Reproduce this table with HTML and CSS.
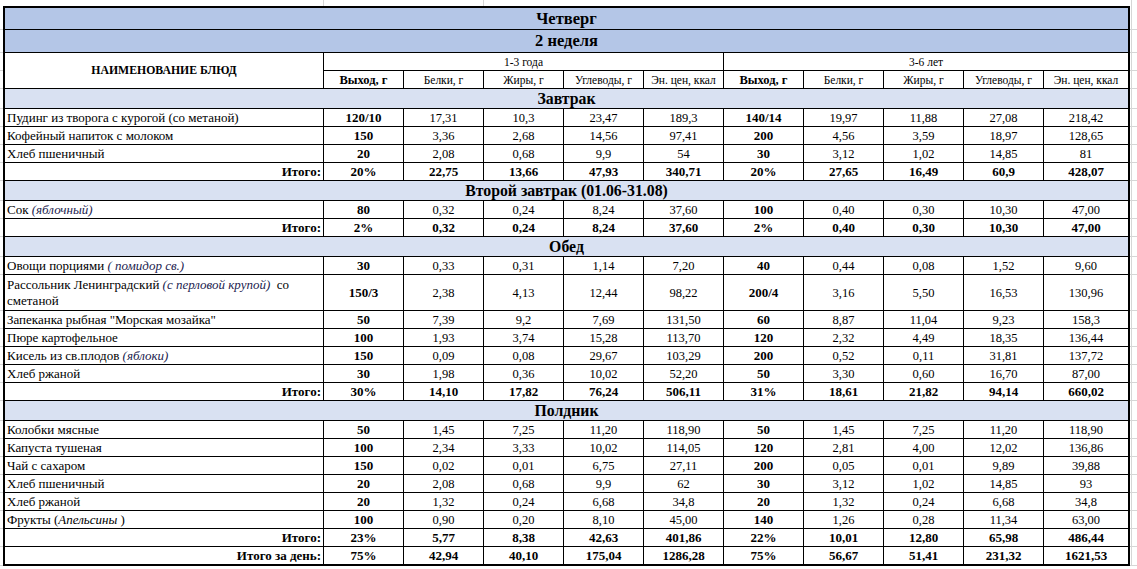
FILE: index.html
```html
<!DOCTYPE html>
<html lang="ru">
<head>
<meta charset="utf-8">
<title>Меню — Четверг, 2 неделя</title>
<link rel="stylesheet" href="styles.css">
</head>
<body>
<table class="sheet">
  <colgroup>
    <col class="w-gl">
    <col class="w-name">
    <col class="w-num"><col class="w-num"><col class="w-num"><col class="w-num"><col class="w-num">
    <col class="w-num"><col class="w-num"><col class="w-num"><col class="w-num">
    <col class="w-last">
    <col class="w-glr">
  </colgroup>
  <tbody>
    <tr class="strip">
      <td class="gl"></td>
      <td class="sl"></td>
      <td class="sl" colspan="2"></td>
      <td colspan="8"></td>
      <td class="gl gr"></td>
    </tr>
    <tr class="r-title first">
      <td class="gl"></td>
      <td class="title" colspan="11">Четверг</td>
      <td class="gl gr"></td>
    </tr>
    <tr class="r-title2">
      <td class="gl"></td>
      <td class="title" colspan="11">2 неделя</td>
      <td class="gl gr"></td>
    </tr>
    <tr class="r-h">
      <td class="gl"></td>
      <td class="hname" rowspan="2">НАИМЕНОВАНИЕ БЛЮД</td>
      <td class="hage" colspan="5">1-3 года</td>
      <td class="hage" colspan="5">3-6 лет</td>
      <td class="gl gr"></td>
    </tr>
    <tr class="r-h h2">
      <td class="gl"></td>
      <td class="hcol hb">Выход, г</td>
      <td class="hcol">Белки, г</td>
      <td class="hcol">Жиры, г</td>
      <td class="hcol">Углеводы, г</td>
      <td class="hcol">Эн. цен, ккал</td>
      <td class="hcol hb">Выход, г</td>
      <td class="hcol">Белки, г</td>
      <td class="hcol">Жиры, г</td>
      <td class="hcol">Углеводы, г</td>
      <td class="hcol">Эн. цен, ккал</td>
      <td class="gl gr"></td>
    </tr>

    <tr class="r-sec">
      <td class="gl"></td>
      <td class="sec" colspan="11">Завтрак</td>
      <td class="gl gr"></td>
    </tr>
    <tr>
      <td class="gl"></td>
      <td class="n">Пудинг из творога с курогой (со метаной)</td>
      <td class="b">120/10</td><td>17,31</td><td>10,3</td><td>23,47</td><td>189,3</td>
      <td class="b">140/14</td><td>19,97</td><td>11,88</td><td>27,08</td><td>218,42</td>
      <td class="gl gr"></td>
    </tr>
    <tr>
      <td class="gl"></td>
      <td class="n">Кофейный напиток с молоком</td>
      <td class="b">150</td><td>3,36</td><td>2,68</td><td>14,56</td><td>97,41</td>
      <td class="b">200</td><td>4,56</td><td>3,59</td><td>18,97</td><td>128,65</td>
      <td class="gl gr"></td>
    </tr>
    <tr>
      <td class="gl"></td>
      <td class="n">Хлеб пшеничный</td>
      <td class="b">20</td><td>2,08</td><td>0,68</td><td>9,9</td><td>54</td>
      <td class="b">30</td><td>3,12</td><td>1,02</td><td>14,85</td><td>81</td>
      <td class="gl gr"></td>
    </tr>
    <tr class="total">
      <td class="gl"></td>
      <td class="t">Итого:</td>
      <td>20%</td><td>22,75</td><td>13,66</td><td>47,93</td><td>340,71</td>
      <td>20%</td><td>27,65</td><td>16,49</td><td>60,9</td><td>428,07</td>
      <td class="gl gr"></td>
    </tr>

    <tr class="r-sec">
      <td class="gl"></td>
      <td class="sec" colspan="11">Второй завтрак (01.06-31.08)</td>
      <td class="gl gr"></td>
    </tr>
    <tr>
      <td class="gl"></td>
      <td class="n">Сок <i class="note">(яблочный)</i></td>
      <td class="b">80</td><td>0,32</td><td>0,24</td><td>8,24</td><td>37,60</td>
      <td class="b">100</td><td>0,40</td><td>0,30</td><td>10,30</td><td>47,00</td>
      <td class="gl gr"></td>
    </tr>
    <tr class="total">
      <td class="gl"></td>
      <td class="t">Итого:</td>
      <td>2%</td><td>0,32</td><td>0,24</td><td>8,24</td><td>37,60</td>
      <td>2%</td><td>0,40</td><td>0,30</td><td>10,30</td><td>47,00</td>
      <td class="gl gr"></td>
    </tr>

    <tr class="r-sec">
      <td class="gl"></td>
      <td class="sec" colspan="11">Обед</td>
      <td class="gl gr"></td>
    </tr>
    <tr>
      <td class="gl"></td>
      <td class="n">Овощи порциями <i class="note">( помидор св.)</i></td>
      <td class="b">30</td><td>0,33</td><td>0,31</td><td>1,14</td><td>7,20</td>
      <td class="b">40</td><td>0,44</td><td>0,08</td><td>1,52</td><td>9,60</td>
      <td class="gl gr"></td>
    </tr>
    <tr class="r-2">
      <td class="gl"></td>
      <td class="n wrap">Рассольник Ленинградский <i class="note">(с перловой крупой)</i>&nbsp; со<br>сметаной</td>
      <td class="b">150/3</td><td>2,38</td><td>4,13</td><td>12,44</td><td>98,22</td>
      <td class="b">200/4</td><td>3,16</td><td>5,50</td><td>16,53</td><td>130,96</td>
      <td class="gl gr"></td>
    </tr>
    <tr>
      <td class="gl"></td>
      <td class="n">Запеканка рыбная "Морская мозайка"</td>
      <td class="b">50</td><td>7,39</td><td>9,2</td><td>7,69</td><td>131,50</td>
      <td class="b">60</td><td>8,87</td><td>11,04</td><td>9,23</td><td>158,3</td>
      <td class="gl gr"></td>
    </tr>
    <tr>
      <td class="gl"></td>
      <td class="n">Пюре картофельное</td>
      <td class="b">100</td><td>1,93</td><td>3,74</td><td>15,28</td><td>113,70</td>
      <td class="b">120</td><td>2,32</td><td>4,49</td><td>18,35</td><td>136,44</td>
      <td class="gl gr"></td>
    </tr>
    <tr>
      <td class="gl"></td>
      <td class="n">Кисель из св.плодов <i class="note">(яблоки)</i></td>
      <td class="b">150</td><td>0,09</td><td>0,08</td><td>29,67</td><td>103,29</td>
      <td class="b">200</td><td>0,52</td><td>0,11</td><td>31,81</td><td>137,72</td>
      <td class="gl gr"></td>
    </tr>
    <tr>
      <td class="gl"></td>
      <td class="n">Хлеб ржаной</td>
      <td class="b">30</td><td>1,98</td><td>0,36</td><td>10,02</td><td>52,20</td>
      <td class="b">50</td><td>3,30</td><td>0,60</td><td>16,70</td><td>87,00</td>
      <td class="gl gr"></td>
    </tr>
    <tr class="total">
      <td class="gl"></td>
      <td class="t">Итого:</td>
      <td>30%</td><td>14,10</td><td>17,82</td><td>76,24</td><td>506,11</td>
      <td>31%</td><td>18,61</td><td>21,82</td><td>94,14</td><td>660,02</td>
      <td class="gl gr"></td>
    </tr>

    <tr class="r-sec">
      <td class="gl"></td>
      <td class="sec" colspan="11">Полдник</td>
      <td class="gl gr"></td>
    </tr>
    <tr>
      <td class="gl"></td>
      <td class="n">Колобки мясные</td>
      <td class="b">50</td><td>1,45</td><td>7,25</td><td>11,20</td><td>118,90</td>
      <td class="b">50</td><td>1,45</td><td>7,25</td><td>11,20</td><td>118,90</td>
      <td class="gl gr"></td>
    </tr>
    <tr>
      <td class="gl"></td>
      <td class="n">Капуста тушеная</td>
      <td class="b">100</td><td>2,34</td><td>3,33</td><td>10,02</td><td>114,05</td>
      <td class="b">120</td><td>2,81</td><td>4,00</td><td>12,02</td><td>136,86</td>
      <td class="gl gr"></td>
    </tr>
    <tr>
      <td class="gl"></td>
      <td class="n">Чай с сахаром</td>
      <td class="b">150</td><td>0,02</td><td>0,01</td><td>6,75</td><td>27,11</td>
      <td class="b">200</td><td>0,05</td><td>0,01</td><td>9,89</td><td>39,88</td>
      <td class="gl gr"></td>
    </tr>
    <tr>
      <td class="gl"></td>
      <td class="n">Хлеб пшеничный</td>
      <td class="b">20</td><td>2,08</td><td>0,68</td><td>9,9</td><td>62</td>
      <td class="b">30</td><td>3,12</td><td>1,02</td><td>14,85</td><td>93</td>
      <td class="gl gr"></td>
    </tr>
    <tr>
      <td class="gl"></td>
      <td class="n">Хлеб ржаной</td>
      <td class="b">20</td><td>1,32</td><td>0,24</td><td>6,68</td><td>34,8</td>
      <td class="b">20</td><td>1,32</td><td>0,24</td><td>6,68</td><td>34,8</td>
      <td class="gl gr"></td>
    </tr>
    <tr>
      <td class="gl"></td>
      <td class="n">Фрукты (<i class="note plain">Апельсины</i> )</td>
      <td class="b">100</td><td>0,90</td><td>0,20</td><td>8,10</td><td>45,00</td>
      <td class="b">140</td><td>1,26</td><td>0,28</td><td>11,34</td><td>63,00</td>
      <td class="gl gr"></td>
    </tr>
    <tr class="total">
      <td class="gl"></td>
      <td class="t">Итого:</td>
      <td>23%</td><td>5,77</td><td>8,38</td><td>42,63</td><td>401,86</td>
      <td>22%</td><td>10,01</td><td>12,80</td><td>65,98</td><td>486,44</td>
      <td class="gl gr"></td>
    </tr>
    <tr class="total r-last">
      <td class="gl"></td>
      <td class="t">Итого за день:</td>
      <td>75%</td><td>42,94</td><td>40,10</td><td>175,04</td><td>1286,28</td>
      <td>75%</td><td>56,67</td><td>51,41</td><td>231,32</td><td>1621,53</td>
      <td class="gl gr"></td>
    </tr>
  </tbody>
</table>
</body>
</html>
```

FILE: styles.css
```css
html, body {
  margin: 0;
  padding: 0;
  background: #ffffff;
}

body {
  font-family: "Liberation Serif", "Times New Roman", serif;
  color: #000000;
}

.sheet {
  border-collapse: separate;
  border-spacing: 0;
  table-layout: fixed;
  width: 1137px;
}

.w-gl { width: 3px; }
.w-name { width: 321px; }
.w-num { width: 80px; }
.w-last { width: 86px; }
.w-glr { width: 7px; }

.sheet td {
  box-sizing: border-box;
  height: 18px;
  padding: 0 2px;
  border-right: 1px solid #000000;
  border-bottom: 1px solid #000000;
  font-size: 12.5px;
  line-height: 14px;
  text-align: center;
  vertical-align: middle;
  white-space: nowrap;
  overflow: hidden;
}

/* spreadsheet gridlines outside the table */
.sheet td.gl {
  padding: 0;
  border-right: 0;
  border-bottom: 1px solid #d6d6d6;
}

.sheet td.gr {
  background: linear-gradient(90deg, transparent 1px, #d6d6d6 1px, #d6d6d6 2px, transparent 2px);
}

.sheet tr.strip td {
  height: 6px;
  padding: 0;
  border-right: 0;
  border-bottom: 0;
}

.sheet tr.strip td.sl {
  border-right: 1px solid #d6d6d6;
}

/* thick outer frame */
.sheet tr:not(.strip):not(.h2) td.gl + td {
  border-left: 2px solid #000000;
}

.sheet tr:not(.strip) td:nth-last-child(2) {
  border-right: 2px solid #000000;
}

.sheet tr.first td:not(.gl) {
  border-top: 2px solid #000000;
}

.sheet tr.r-last td:not(.gl) {
  border-bottom: 2px solid #000000;
}

/* row heights */
.sheet tr.r-title td { height: 24px; }
.sheet tr.r-title2 td { height: 23px; }
.sheet tr.r-sec td { height: 20px; }
.sheet tr.r-2 td { height: 36px; }
.sheet tr.r-last td { height: 19px; }

/* titles */
.sheet td.title {
  background: #b4c6e7;
  font-weight: bold;
  font-size: 16.5px;
}

.sheet td.sec {
  background: #d9e1f2;
  font-weight: bold;
  font-size: 15.8px;
}

.sheet td.hname {
  font-weight: bold;
  font-size: 11.75px;
}

.sheet td.hage,
.sheet td.hcol {
  font-size: 11.5px;
}

.sheet td.hb {
  font-weight: bold;
  font-size: 12.5px;
}

.sheet td.b {
  font-weight: bold;
  font-size: 13px;
}

.sheet td.n {
  text-align: left;
  font-size: 13px;
}

.sheet td.wrap {
  white-space: normal;
  line-height: 16px;
}

.sheet td.t {
  text-align: right;
}

.sheet tr.total td {
  font-weight: bold;
  font-size: 13px;
}

.note {
  font-style: italic;
  color: #23234f;
}

.note.plain {
  color: #000000;
}
```
